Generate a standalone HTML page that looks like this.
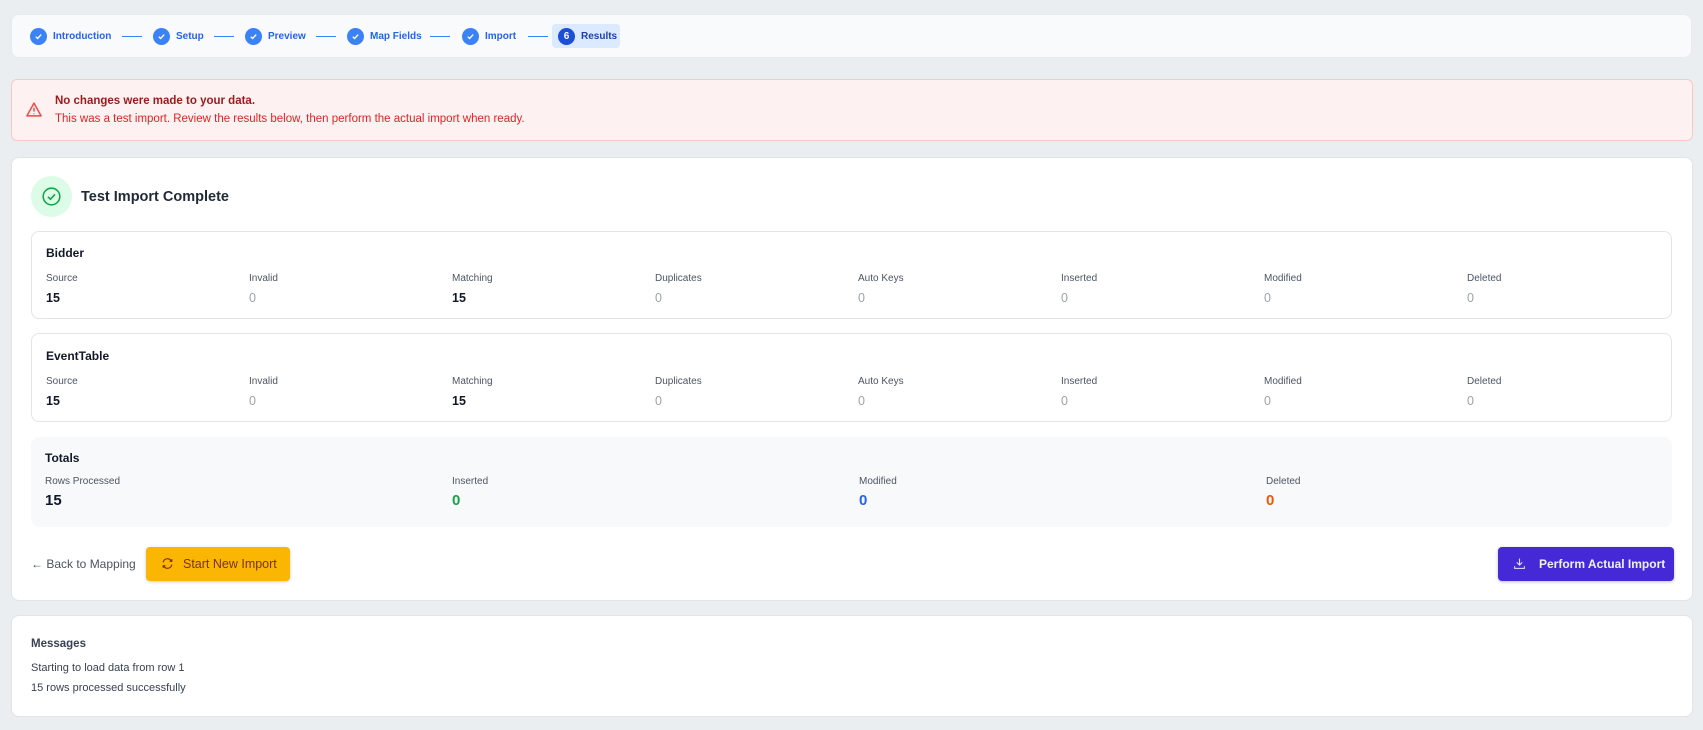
<!DOCTYPE html>
<html><head><meta charset="utf-8"><style>
*{box-sizing:border-box;margin:0;padding:0}
body{width:1703px;height:730px;background:#ebeef0;font-family:"Liberation Sans",sans-serif;position:relative;overflow:hidden;color:#111827}
.abs{position:absolute}
.card{position:absolute;background:#fff;border:1px solid #e2e5e8;border-radius:8px}
.step{position:absolute;top:26px;height:20px;display:flex;align-items:center;font-size:10px;font-weight:bold;color:#2563eb}
.dot{width:17px;height:17px;border-radius:50%;background:#3b82f6;display:inline-flex;align-items:center;justify-content:center;margin-right:6px}
.line{position:absolute;top:36px;height:1px;background:#3b82f6}
.box{position:absolute;left:31px;width:1641px;border:1px solid #e2e5e8;border-radius:8px;background:#fff}
.lbl{position:absolute;font-size:10px;color:#4b5563}
.val{position:absolute;font-size:12.5px;font-weight:bold;color:#111827}
.g{color:#9ca3af;font-weight:normal}
.ttl{position:absolute;font-size:12px;font-weight:bold;color:#111827}
</style></head><body>
<div class="card" style="left:11px;top:14px;width:1681px;height:44px;background:#f8fafc;border-color:#e8ebee"></div>
<div class="step" style="left:30px"><span class="dot"><svg width="9" height="9" viewBox="0 0 10 10"><path d="M2 5.2l2 2 4-4.4" stroke="#fff" stroke-width="1.5" fill="none"/></svg></span>Introduction</div>
<div class="line" style="left:122px;width:20px"></div>
<div class="step" style="left:153px"><span class="dot"><svg width="9" height="9" viewBox="0 0 10 10"><path d="M2 5.2l2 2 4-4.4" stroke="#fff" stroke-width="1.5" fill="none"/></svg></span>Setup</div>
<div class="line" style="left:214px;width:20px"></div>
<div class="step" style="left:245px"><span class="dot"><svg width="9" height="9" viewBox="0 0 10 10"><path d="M2 5.2l2 2 4-4.4" stroke="#fff" stroke-width="1.5" fill="none"/></svg></span>Preview</div>
<div class="line" style="left:316px;width:20px"></div>
<div class="step" style="left:347px"><span class="dot"><svg width="9" height="9" viewBox="0 0 10 10"><path d="M2 5.2l2 2 4-4.4" stroke="#fff" stroke-width="1.5" fill="none"/></svg></span>Map Fields</div>
<div class="line" style="left:430px;width:20px"></div>
<div class="step" style="left:462px"><span class="dot"><svg width="9" height="9" viewBox="0 0 10 10"><path d="M2 5.2l2 2 4-4.4" stroke="#fff" stroke-width="1.5" fill="none"/></svg></span>Import</div>
<div class="line" style="left:528px;width:20px"></div>
<div class="abs" style="left:552px;top:24px;width:68px;height:24px;background:#dbeafe;border-radius:4px"></div>
<div class="step" style="left:558px;color:#1e40af"><span class="dot" style="background:#1d4ed8;color:#fff;font-size:10px">6</span>Results</div>

<div class="abs" style="left:11px;top:79px;width:1682px;height:62px;background:#fef1f1;border:1px solid #fbc7c7;border-radius:6px"></div>
<svg class="abs" style="left:25px;top:101px" width="18" height="17" viewBox="0 0 24 24"><path d="M12 3L2 21h20z" fill="none" stroke="#ef4444" stroke-width="2" stroke-linejoin="round"/><path d="M12 9.5v5.5M12 17.5v1" stroke="#ef4444" stroke-width="2"/></svg>
<div class="abs" style="left:55px;top:95px;font-size:11.5px;font-weight:bold;color:#991b1b">No changes were made to your data.</div>
<div class="abs" style="left:55px;top:113px;font-size:11.5px;color:#dc2626">This was a test import. Review the results below, then perform the actual import when ready.</div>

<div class="card" style="left:11px;top:157px;width:1682px;height:444px"></div>
<div class="abs" style="left:31px;top:176px;width:41px;height:41px;border-radius:50%;background:#dcfce7"></div>
<svg class="abs" style="left:41px;top:186px" width="21" height="21" viewBox="0 0 24 24"><circle cx="12" cy="12" r="9.5" fill="none" stroke="#16a34a" stroke-width="1.8"/><path d="M8 12.3l2.8 2.8 5.2-5.6" fill="none" stroke="#16a34a" stroke-width="1.8"/></svg>
<div class="abs" style="left:81px;top:189px;font-size:14.5px;font-weight:bold;color:#1f2937">Test Import Complete</div>

<div class="box" style="top:231px;height:88px"></div>
<div class="ttl" style="left:46px;top:246px">Bidder</div>
<div class="box" style="top:333px;height:89px"></div>
<div class="ttl" style="left:46px;top:349px">EventTable</div>

<div class="abs" style="left:31px;top:437px;width:1641px;height:90px;background:#f8f9fb;border-radius:8px"></div>
<div class="ttl" style="left:45px;top:451px">Totals</div>
<div class="lbl" style="left:45px;top:476px">Rows Processed</div><div class="val" style="left:45px;top:492px;font-size:15px">15</div>
<div class="lbl" style="left:452px;top:476px">Inserted</div><div class="val" style="left:452px;top:492px;font-size:15px;color:#16a34a">0</div>
<div class="lbl" style="left:859px;top:476px">Modified</div><div class="val" style="left:859px;top:492px;font-size:15px;color:#2563eb">0</div>
<div class="lbl" style="left:1266px;top:476px">Deleted</div><div class="val" style="left:1266px;top:492px;font-size:15px;color:#ea580c">0</div>

<div id="r1"></div>

<div class="abs" style="left:31px;top:557px;font-size:12px;color:#4b5563">← Back to Mapping</div>
<div class="abs" style="left:146px;top:547px;width:144px;height:34px;background:#fbb604;border-radius:4px;box-shadow:0 1px 3px rgba(0,0,0,.2)"></div>
<svg class="abs" style="left:161px;top:557px" width="13" height="13" viewBox="0 0 24 24"><path d="M4 10a8 8 0 0 1 14-4l2 2M20 4v4h-4M20 14a8 8 0 0 1-14 4l-2-2M4 20v-4h4" fill="none" stroke="#7c2d12" stroke-width="2"/></svg>
<div class="abs" style="left:183px;top:557px;font-size:12.5px;color:#78350f">Start New Import</div>
<div class="abs" style="left:1498px;top:547px;width:176px;height:34px;background:#4529d6;border-radius:4px;box-shadow:0 1px 3px rgba(0,0,0,.25)"></div>
<svg class="abs" style="left:1513px;top:557px" width="13" height="13" viewBox="0 0 24 24"><path d="M12 3v12M7 10l5 5 5-5M3 17v4h18v-4" fill="none" stroke="#e0e7ff" stroke-width="2"/></svg>
<div class="abs" style="left:1539px;top:557px;font-size:12px;font-weight:bold;color:#eef2ff">Perform Actual Import</div>

<div class="card" style="left:11px;top:615px;width:1682px;height:102px"></div>
<div class="abs" style="left:31px;top:638px;font-size:11.5px;font-weight:bold;color:#374151">Messages</div>
<div class="abs" style="left:31px;top:662px;font-size:11px;color:#374151">Starting to load data from row 1</div>
<div class="abs" style="left:31px;top:682px;font-size:11px;color:#374151">15 rows processed successfully</div>

<script>
var labels=["Source","Invalid","Matching","Duplicates","Auto Keys","Inserted","Modified","Deleted"];
var vals=["15","0","15","0","0","0","0","0"];
var h="";
[[273,291],[376,394]].forEach(function(t){
 for(var i=0;i<8;i++){var x=46+203*i;
  h+='<div class="lbl" style="left:'+x+'px;top:'+t[0]+'px">'+labels[i]+'</div>';
  h+='<div class="val'+(vals[i]=="0"?' g':'')+'" style="left:'+x+'px;top:'+t[1]+'px">'+vals[i]+'</div>';}
});
document.getElementById("r1").outerHTML=h;
</script>
</body></html>
